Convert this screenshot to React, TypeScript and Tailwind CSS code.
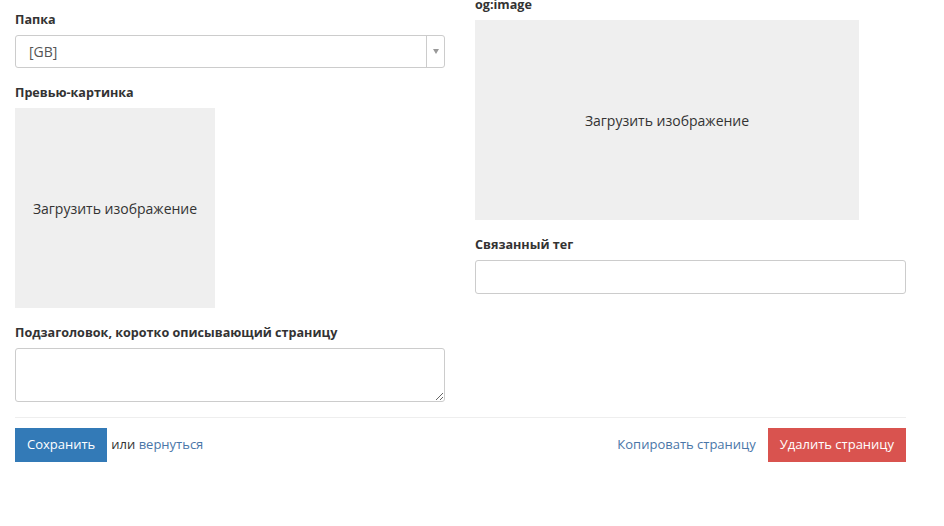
import React from 'react';

const labelCls = 'block mb-[5px] text-[12.6px] leading-5 font-bold text-[#333]';

const UploadBox = ({ className }: { className: string }) => (
  <div className={`flex items-center justify-center bg-[#efefef] text-[14px] text-[#333] ${className}`}>
    Загрузить изображение
  </div>
);

export default function App() {
  return (
    <div className="bg-white min-h-[526px] font-['Open_Sans',sans-serif] text-[13px] text-[#333]">
      <div className="w-[891px] ml-[15px] pt-[10px]">
        <div className="grid grid-cols-[430px_431px] gap-x-[30px]">
          {/* left column */}
          <div>
            <div className="mb-[15px]">
              <label className={labelCls}>Папка</label>
              <div className="flex h-[33px] border border-[#ccc] rounded-[3px] bg-white">
                <div className="flex-1 flex items-center pl-[13px] text-[14px] text-[#555]">[GB]</div>
                <div className="w-[18px] border-l border-[#ccc] flex items-center justify-center">
                  <div className="w-0 h-0 border-l-[3px] border-r-[3px] border-t-[5px] border-l-transparent border-r-transparent border-t-[#999]" />
                </div>
              </div>
            </div>
            <div className="mb-[15px]">
              <label className={labelCls}>Превью-картинка</label>
              <UploadBox className="w-[200px] h-[200px]" />
            </div>
            <div>
              <label className={labelCls}>Подзаголовок, коротко описывающий страницу</label>
              <textarea className="block w-full h-[54px] border border-[#ccc] rounded-[3px] px-3 py-1.5 outline-none" />
            </div>
          </div>

          {/* right column */}
          <div className="-mt-[15px]">
            <div className="mb-[15px]">
              <label className={labelCls}>og:image</label>
              <UploadBox className="w-[384px] h-[200px]" />
            </div>
            <div>
              <label className={labelCls}>Связанный тег</label>
              <input className="block w-full h-[34px] border border-[#ccc] rounded-[3px] px-3 outline-none" />
            </div>
          </div>
        </div>

        <hr className="mt-[15px] mb-[10px] border-t border-[#eee]" />

        <div className="flex items-center justify-between">
          <div className="flex items-center">
            <button className="h-[34px] px-[12px] bg-[#337ab7] text-white text-[13px]">Сохранить</button>
            <span className="ml-[4px] text-[#333]">
              или <a className="text-[#4a76a8]">вернуться</a>
            </span>
          </div>
          <div className="flex items-center">
            <a className="text-[#4a76a8] mr-[12px]">Копировать страницу</a>
            <button className="h-[34px] px-[12px] bg-[#d9534f] text-white text-[13px]">Удалить страницу</button>
          </div>
        </div>
      </div>
    </div>
  );
}
